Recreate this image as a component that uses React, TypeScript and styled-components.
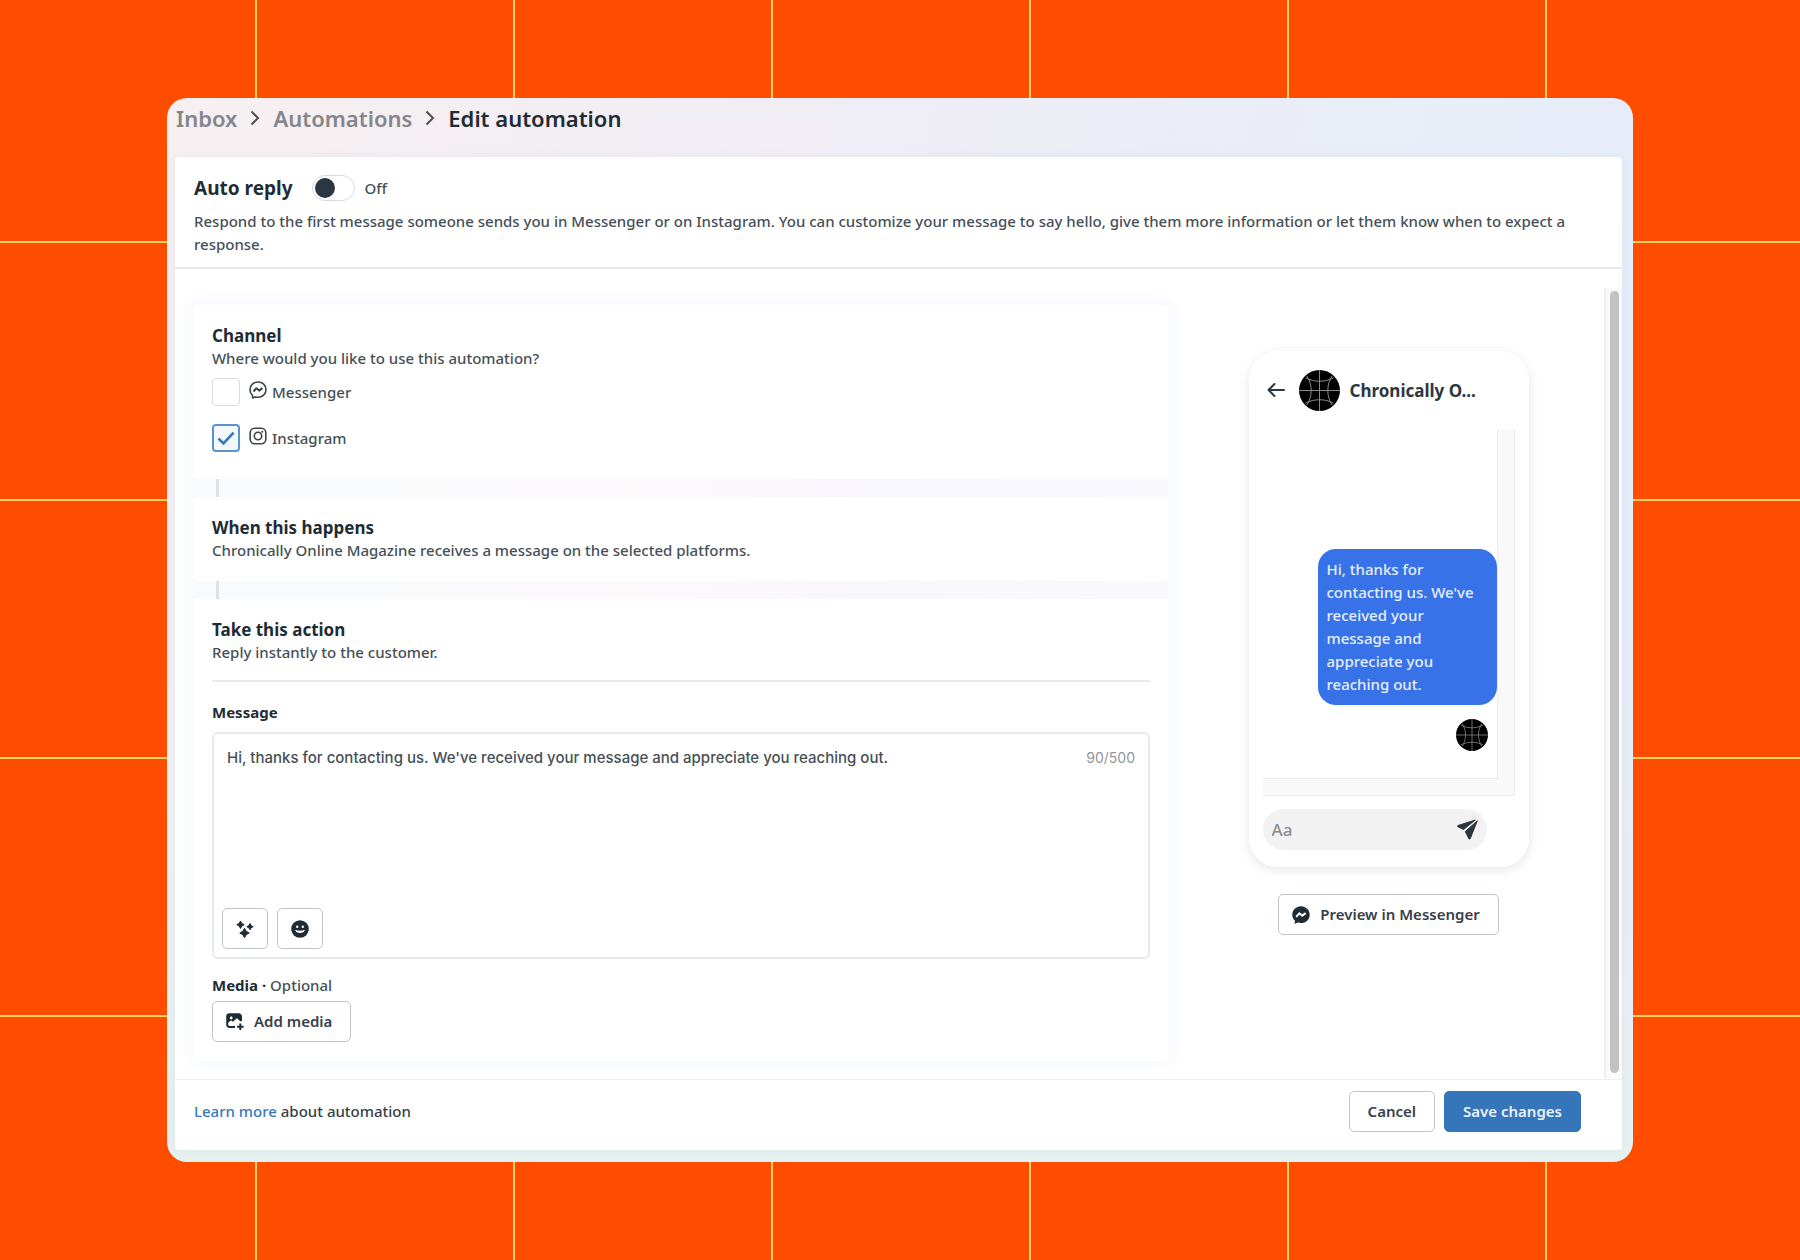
import React, { useState } from "react";
import styled, { createGlobalStyle, css } from "styled-components";

const ink = "#1f2c35";
const body = "#465057";
const line = "#e8eaec";

const GlobalStyle = createGlobalStyle`
  * { box-sizing: border-box; }
  body {
    margin: 0;
    font-family: "Noto Sans", "Open Sans", sans-serif;
    font-size: 15px;
    line-height: 23px;
    font-weight: 500;
    color: ${body};
  }
  h1, h2, p { margin: 0; }
  button, input, textarea { font: inherit; color: inherit; }
`;

const Page = styled.div`
  min-height: 100vh;
  display: flex;
  padding: 98px 167px;
  background-color: #ff4d00;
  background-image:
    linear-gradient(90deg, #ffcf6e 2px, transparent 2px),
    linear-gradient(#ffcf6e 2px, transparent 2px);
  background-size: 258px 258px;
  background-position: 255px 241px;
`;

const AppWindow = styled.div`
  flex: 1;
  min-width: 0;
  display: flex;
  flex-direction: column;
  padding: 0 11px 12px 8px;
  border-radius: 20px;
  background:
    linear-gradient(to bottom, transparent 50%, #e5f1f1 100%),
    linear-gradient(100deg, #f7f0f1 0%, #f0edf5 40%, #e9eef8 75%, #e5ebf8 100%);
`;

const Breadcrumb = styled.nav`
  display: flex;
  align-items: center;
  gap: 13px;
  height: 59px;
  padding: 0 1px 20px;
  font-size: 22px;
  line-height: 30px;
  font-weight: 600;
  color: ${ink};
`;

const Crumb = styled.a`
  color: #85868b;
  text-decoration: none;
`;

const Panel = styled.main`
  flex: 1;
  display: flex;
  flex-direction: column;
  border-radius: 4px;
  background: #fff;
  box-shadow: 0 0 10px rgba(70, 70, 130, 0.06);
`;

const Header = styled.header`
  padding: 15px 19px 11px;
  border-bottom: 2px solid ${line};
`;

const HeaderRow = styled.div`
  display: flex;
  align-items: center;
  height: 32px;
  margin-bottom: 6px;
`;

const PageTitle = styled.h1`
  margin-right: 19px;
  font-size: 19px;
  font-weight: 700;
  color: ${ink};
`;

const SwitchLabel = styled.label`
  display: flex;
  align-items: center;
  gap: 10px;
`;

const Switch = styled.input`
  appearance: none;
  width: 43px;
  height: 26px;
  margin: 0;
  padding: 2px;
  border: 1px solid #d9dbde;
  border-radius: 13px;
  background: #fff;
  &::before {
    content: "";
    display: block;
    width: 20px;
    height: 20px;
    border-radius: 50%;
    background: #2a3742;
  }
  &:checked::before { margin-left: 17px; }
`;

const Content = styled.div`
  flex: 1;
  display: grid;
  grid-template-columns: minmax(0, 1fr) 436px 18px;
  padding: 19px 0 0 19px;
`;

const Steps = styled.div`
  margin: 17px 0 18px;
  align-self: start;
  border-radius: 4px;
  background: linear-gradient(90deg, #f8fbfb, #fcf9fb 45%, #f9f7fd 65%, #f8f8fd);
  box-shadow: 0 0 12px 8px #fafbfe;
`;

const Card = styled.section`
  padding: 19px 18px;
  border-radius: 4px;
  background: #fff;
`;

const Connector = styled.div`
  width: 3px;
  height: 18px;
  margin-left: 22px;
  background: #dfe1e3;
`;

const CardTitle = styled.h2`
  font-size: 17px;
  line-height: 23px;
  font-weight: 700;
  color: ${ink};
`;

const OptionList = styled.div`
  display: grid;
  gap: 18px;
  padding: 8px 0;
`;

const Option = styled.label`
  display: flex;
  align-items: center;
  height: 28px;
  svg { margin: 0 5px 4px 9px; }
`;

const CheckBox = styled.input`
  appearance: none;
  width: 28px;
  height: 28px;
  margin: 0;
  border: 1px solid #d9dbde;
  border-radius: 4px;
  background: #fff;
  &:checked {
    border: 2px solid #5b93d0;
    background: #f3f8fd url("data:image/svg+xml,%3Csvg xmlns='http://www.w3.org/2000/svg' viewBox='0 0 24 24'%3E%3Cpath d='M5 12.5l4.7 4.5L19 7' fill='none' stroke='%233578bd' stroke-width='2.400'/%3E%3C/svg%3E") center / 26px no-repeat;
  }
`;

const Rule = styled.hr`
  height: 2px;
  margin: 16px 0 19px;
  border: 0;
  background: ${line};
`;

const FieldLabel = styled.label`
  display: block;
  margin-bottom: 8px;
  font-weight: 700;
  color: ${ink};
`;

const Editor = styled.div`
  height: 227px;
  display: flex;
  flex-direction: column;
  padding: 8px;
  border: 2px solid ${line};
  border-radius: 6px;
`;

const EditorTop = styled.div`
  flex: 1;
  display: flex;
  gap: 12px;
  padding: 4px 5px;
  font-family: Inter, sans-serif;
`;

const MessageBox = styled.textarea`
  flex: 1;
  padding: 0;
  border: 0;
  outline: 0;
  resize: none;
  background: none;
`;

const Counter = styled.span`
  font-size: 14px;
  font-weight: 400;
  color: #93969a;
`;

const ButtonRow = styled.div`
  display: flex;
  gap: 9px;
`;

const Button = styled.button<{ $primary?: boolean; $square?: boolean; $leading?: boolean }>`
  display: inline-flex;
  align-items: center;
  justify-content: center;
  gap: 10px;
  height: 41px;
  padding: 0 18px;
  border: 1px solid #bfc3ca;
  border-radius: 5px;
  background: #fff;
  color: #36414a;
  font-weight: 600;
  ${(p) => p.$leading && css`padding-left: 13px;`}
  ${(p) => p.$square && css`width: 46px; padding: 0;`}
  ${(p) => p.$primary && css`border-color: #3575ba; background: #3575ba; color: #e8f1fc;`}
`;

const MediaLabel = styled.p`
  margin: 15px 0 4px;
  strong { font-weight: 700; color: ${ink}; }
`;

const Preview = styled.aside`
  display: flex;
  flex-direction: column;
  align-items: center;
  gap: 27px;
  padding: 63px 0 0 5px;
`;

const Phone = styled.div`
  width: 280px;
  padding: 18px 14px 17px;
  border-radius: 28px;
  background: #fff;
  box-shadow: 0 3px 12px rgba(0, 0, 0, 0.1);
`;

const PhoneHeader = styled.div`
  display: flex;
  align-items: center;
  height: 42px;
  margin-bottom: 18px;
  padding-left: 4px;
  font-size: 17px;
  font-weight: 700;
  color: #2b363f;
`;

const BackButton = styled.button`
  display: flex;
  margin-right: 14px;
  padding: 0;
  border: 0;
  background: none;
`;

const Contact = styled.span`
  margin-left: 10px;
  white-space: nowrap;
`;

const Chat = styled.div`
  height: 367px;
  padding: 0 16px 16px 0;
  border-right: 1px solid #ececee;
  border-bottom: 1px solid #ececee;
  background: #f9f9f9;
`;

const ChatView = styled.div`
  height: 100%;
  display: flex;
  flex-direction: column;
  align-items: flex-end;
  padding-top: 120px;
  border-right: 1px solid #ececee;
  border-bottom: 1px solid #ececee;
  background: #fff;
`;

const Bubble = styled.p`
  width: 179px;
  margin-bottom: 14px;
  padding: 9px;
  border-radius: 18px;
  background: #3872e8;
  color: #e6eeff;
`;

const SmallAvatar = styled.div`
  display: flex;
  margin-right: 9px;
`;

const Composer = styled.div`
  display: flex;
  align-items: center;
  width: 224px;
  height: 41px;
  margin-top: 13px;
  padding: 0 9px;
  border-radius: 21px;
  background: #f2f2f2;
`;

const ComposerInput = styled.input`
  flex: 1;
  min-width: 0;
  padding: 0;
  border: 0;
  outline: 0;
  background: none;
  font-size: 17px;
  &::placeholder { color: #8b8e92; opacity: 1; }
`;

const SendButton = styled.button`
  display: flex;
  padding: 0;
  border: 0;
  background: none;
`;

const ScrollTrack = styled.div`
  padding: 3px 4px 6px;
  border-left: 2px solid #f0f0f1;
  background: #fafafa;
`;

const ScrollThumb = styled.div`
  width: 9px;
  height: 100%;
  border-radius: 5px;
  background: #c2c2c2;
`;

const Footer = styled.footer`
  display: flex;
  align-items: center;
  justify-content: space-between;
  height: 71px;
  padding: 0 41px 8px 19px;
  border-top: 1px solid #f0f1f3;
  color: #343f47;
`;

const TextLink = styled.a`
  color: #3578bd;
  text-decoration: none;
`;

const Chevron = () => (
  <svg width="10" height="16" viewBox="0 0 10 16" fill="none" stroke="#4a5259" strokeWidth="2" aria-hidden="true">
    <path d="M1.500 1.500 8 8l-6.500 6.500" />
  </svg>
);

const MessengerOutline = () => (
  <svg width="18" height="18" viewBox="0 0 18 18" fill="none" stroke="#3a444b" strokeWidth="1.600" strokeLinejoin="round" aria-hidden="true">
    <path d="M9 1C4.500 1 1 4.200 1 8.700c0 2.400 1 4.300 2.500 5.700L3.600 17l2.600-1.100c.9.300 1.800.400 2.800.400 4.500 0 8-3.200 8-7.600S13.500 1 9 1Z" />
    <path d="m4.600 10.500 2.700-3.300 2.900 2.400 3.200-2.500" strokeWidth="2" />
  </svg>
);

const MessengerSolid = () => (
  <svg width="18" height="18" viewBox="0 0 18 18" aria-hidden="true">
    <path fill={ink} d="M9 .3C4 .3.3 3.900.3 8.700c0 2.500 1 4.600 2.700 6.100L2.600 17.900l3.300-1.300c1 .3 2 .4 3.100.4 5 0 8.700-3.500 8.700-8.300S14 .3 9 .3Z" />
    <path fill="none" stroke="#fff" strokeWidth="2" strokeLinejoin="round" d="m4.200 10.800 3.100-3.500 2.900 2.300 3.500-2.500" />
  </svg>
);

const InstagramIcon = () => (
  <svg width="18" height="18" viewBox="0 0 18 18" fill="none" stroke="#3a444b" strokeWidth="1.600" aria-hidden="true">
    <rect x="1.200" y="1.200" width="15.600" height="15.600" rx="4.500" />
    <circle cx="9" cy="9" r="3.700" />
    <circle cx="13.300" cy="4.700" r="1" fill="#3a444b" stroke="none" />
  </svg>
);

const SparkleIcon = () => (
  <svg width="18" height="18" viewBox="0 0 18 18" fill={ink} stroke={ink} strokeWidth="1" strokeLinejoin="round" aria-hidden="true">
    <path d="M4.500 1 5.800 3.400 8.200 4.700 5.800 6 4.500 8.400 3.200 6 .8 4.700 3.200 3.400Z" />
    <path d="M14 3.500 15.100 5.600 17.200 6.700 15.100 7.800 14 9.900 12.900 7.800 10.800 6.700 12.900 5.600Z" />
    <path d="M8.500 8.300 10.200 11.300 13.200 13 10.200 14.700 8.500 17.700 6.800 14.700 3.800 13 6.800 11.300Z" />
  </svg>
);

const SmileIcon = () => (
  <svg width="18" height="18" viewBox="0 0 18 18" aria-hidden="true">
    <circle cx="9" cy="9" r="8.800" fill={ink} />
    <circle cx="6.200" cy="6.800" r="1.200" fill="#fff" />
    <circle cx="11.800" cy="6.800" r="1.200" fill="#fff" />
    <path d="M4.600 10.500c1 2.600 7.800 2.600 8.800 0-2.400.9-6.400.9-8.800 0Z" fill="#fff" stroke="#fff" strokeWidth="1" strokeLinejoin="round" />
  </svg>
);

const AddMediaIcon = () => (
  <svg width="18" height="18" viewBox="0 0 18 18" fill="none" stroke={ink} strokeWidth="2" aria-hidden="true">
    <path d="M15 8V3.500A2.300 2.300 0 0 0 12.700 1.200H3.500A2.300 2.300 0 0 0 1.200 3.500v8.200A2.300 2.300 0 0 0 3.500 14H9" />
    <path d="M1.200 10.500 5 7.500l2 1.300 3.800-3.600L15 8.800V3L13 1H3L1 3Z" fill={ink} stroke="none" />
    <circle cx="5.200" cy="5" r="1.400" fill="#fff" stroke="none" />
    <path d="M14.300 10.500v6.500M11 13.800h6.600" />
  </svg>
);

const BackIcon = () => (
  <svg width="18" height="16" viewBox="0 0 18 16" fill="none" stroke="#2b363f" strokeWidth="2" strokeLinecap="round" strokeLinejoin="round" aria-hidden="true">
    <path d="M17 8H1.500M7.500 2l-6 6 6 6" />
  </svg>
);

const SendIcon = () => (
  <svg width="21" height="21" viewBox="0 0 21 21" fill="#2b363f" stroke="#2b363f" strokeWidth="1" strokeLinejoin="round" aria-hidden="true">
    <path d="M18.300 1 1 6.500c-.6.200-.6 1 0 1.300L6.500 10.500Z" />
    <path d="M20.300 1.800 8.300 12.500 11.700 19.500c.4.800 1.300.8 1.600 0Z" />
  </svg>
);

const Avatar = ({ size }: { size: number }) => (
  <svg width={size} height={size} viewBox="0 0 42 42" fill="none" stroke="#8b8b8b" strokeWidth="1" aria-hidden="true">
    <circle cx="21" cy="21" r="21" fill="#000" stroke="none" />
    <path d="M21 0v42M0 21h42M8 6c6 9 6 21 0 30M34 6c-6 9-6 21 0 30M6.500 8c9 4.700 20 4.700 29 0M6.500 34c9-4.700 20-4.700 29 0" />
  </svg>
);

const shorten = (text: string, max: number) =>
  text.length > max ? `${text.slice(0, max)}...` : text;

export default function App() {
  const [message, setMessage] = useState(
    "Hi, thanks for contacting us. We've received your message and appreciate you reaching out."
  );
  const [enabled, setEnabled] = useState(false);

  return (
    <Page>
      <GlobalStyle />
      <AppWindow>
        <Breadcrumb aria-label="Breadcrumb">
          <Crumb href="#inbox">Inbox</Crumb>
          <Chevron />
          <Crumb href="#automations">Automations</Crumb>
          <Chevron />
          <span aria-current="page">Edit automation</span>
        </Breadcrumb>
        <Panel>
          <Header>
            <HeaderRow>
              <PageTitle>Auto reply</PageTitle>
              <SwitchLabel>
                <Switch type="checkbox" role="switch" checked={enabled} onChange={(e) => setEnabled(e.target.checked)} />
                {enabled ? "On" : "Off"}
              </SwitchLabel>
            </HeaderRow>
            <p>
              Respond to the first message someone sends you in Messenger or on Instagram. You can customize your
              message to say hello, give them more information or let them know when to expect a response.
            </p>
          </Header>
          <Content>
            <Steps>
              <Card>
                <CardTitle>Channel</CardTitle>
                <p>Where would you like to use this automation?</p>
                <OptionList>
                  <Option>
                    <CheckBox type="checkbox" />
                    <MessengerOutline />
                    Messenger
                  </Option>
                  <Option>
                    <CheckBox type="checkbox" defaultChecked />
                    <InstagramIcon />
                    Instagram
                  </Option>
                </OptionList>
              </Card>
              <Connector />
              <Card>
                <CardTitle>When this happens</CardTitle>
                <p>Chronically Online Magazine receives a message on the selected platforms.</p>
              </Card>
              <Connector />
              <Card>
                <CardTitle>Take this action</CardTitle>
                <p>Reply instantly to the customer.</p>
                <Rule />
                <FieldLabel htmlFor="message">Message</FieldLabel>
                <Editor>
                  <EditorTop>
                    <MessageBox id="message" value={message} maxLength={500} onChange={(e) => setMessage(e.target.value)} />
                    <Counter>{message.length}/500</Counter>
                  </EditorTop>
                  <ButtonRow>
                    <Button type="button" $square aria-label="Suggest text"><SparkleIcon /></Button>
                    <Button type="button" $square aria-label="Insert emoji"><SmileIcon /></Button>
                  </ButtonRow>
                </Editor>
                <MediaLabel><strong>Media ·</strong> Optional</MediaLabel>
                <Button type="button" $leading><AddMediaIcon />Add media</Button>
              </Card>
            </Steps>
            <Preview>
              <Phone>
                <PhoneHeader>
                  <BackButton type="button" aria-label="Back"><BackIcon /></BackButton>
                  <Avatar size={41} />
                  <Contact>{shorten("Chronically Online Magazine", 13)}</Contact>
                </PhoneHeader>
                <Chat>
                  <ChatView>
                    <Bubble>{message}</Bubble>
                    <SmallAvatar><Avatar size={32} /></SmallAvatar>
                  </ChatView>
                </Chat>
                <Composer>
                  <ComposerInput placeholder="Aa" aria-label="Message preview" />
                  <SendButton type="button" aria-label="Send"><SendIcon /></SendButton>
                </Composer>
              </Phone>
              <Button type="button" $leading><MessengerSolid />Preview in Messenger</Button>
            </Preview>
            <ScrollTrack aria-hidden="true"><ScrollThumb /></ScrollTrack>
          </Content>
          <Footer>
            <span><TextLink href="#learn">Learn more</TextLink> about automation</span>
            <ButtonRow>
              <Button type="button">Cancel</Button>
              <Button type="button" $primary>Save changes</Button>
            </ButtonRow>
          </Footer>
        </Panel>
      </AppWindow>
    </Page>
  );
}
